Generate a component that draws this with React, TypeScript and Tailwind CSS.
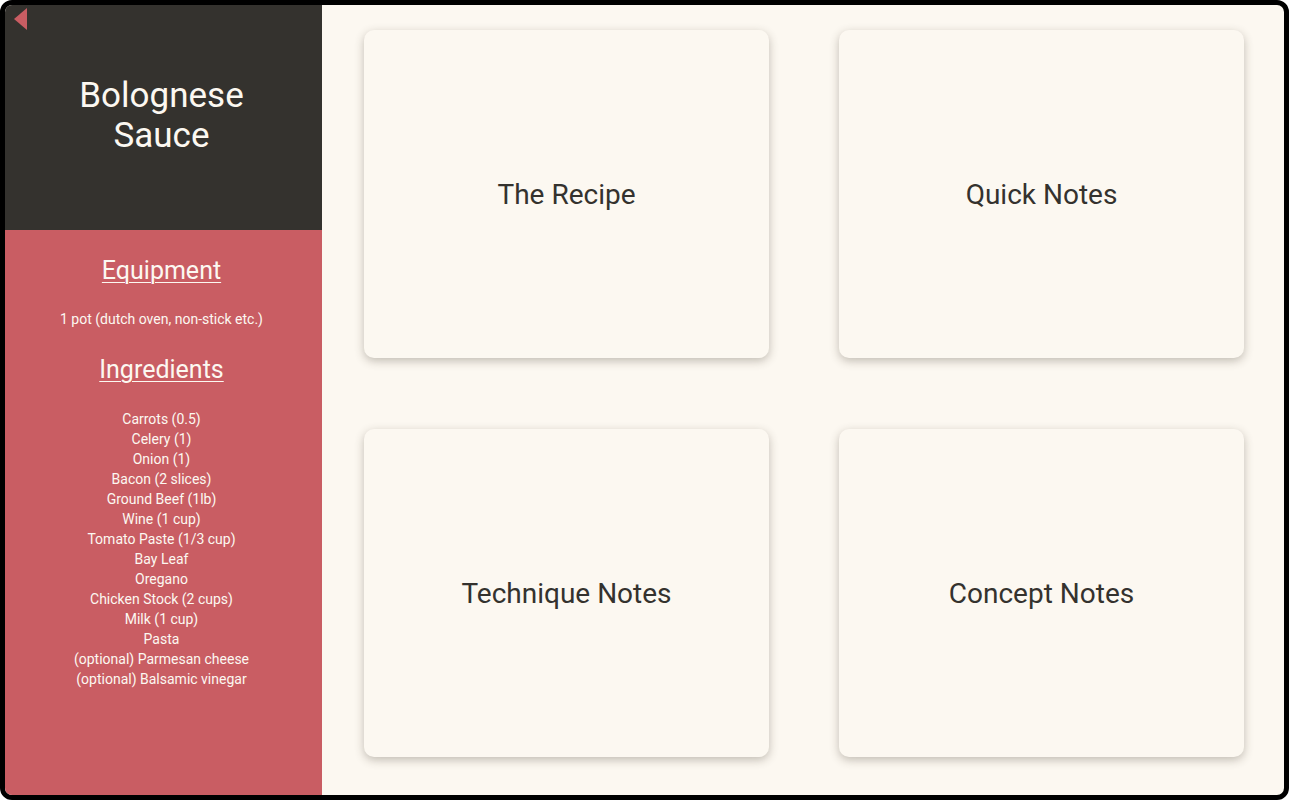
const ingredients = [
  "Carrots (0.5)",
  "Celery (1)",
  "Onion (1)",
  "Bacon (2 slices)",
  "Ground Beef (1lb)",
  "Wine (1 cup)",
  "Tomato Paste (1/3 cup)",
  "Bay Leaf",
  "Oregano",
  "Chicken Stock (2 cups)",
  "Milk (1 cup)",
  "Pasta",
  "(optional) Parmesan cheese",
  "(optional) Balsamic vinegar",
];

const sections = ["The Recipe", "Quick Notes", "Technique Notes", "Concept Notes"];

function Sidebar() {
  return (
    <aside className="flex w-[317px] shrink-0 flex-col">
      <div className="relative flex h-[225px] items-center justify-center bg-[#34322e] pb-[4px] pr-1">
        <button
          aria-label="Back"
          className="absolute left-[9px] top-[3px] h-[22px] w-[13px]"
        >
          <svg width="13" height="22" viewBox="0 0 13 22">
            <polygon points="13,0 13,22 0,11" fill="#c95d63" />
          </svg>
        </button>
        <h1 className="text-center text-[35px] font-normal leading-[40px] text-[#fcf8f1]">
          Bolognese
          <br />
          Sauce
        </h1>
      </div>
      <div className="flex flex-1 flex-col items-center bg-[#c95d63] pr-1 pt-[25px] text-center text-[#fcf8f1]">
        <h2 className="text-[25px] leading-8 underline underline-offset-[3px] decoration-1">
          Equipment
        </h2>
        <p className="mt-[22px] text-[14px] leading-5">1 pot (dutch oven, non-stick etc.)</p>
        <h2 className="mt-[25px] text-[25px] leading-8 underline underline-offset-[3px] decoration-1">
          Ingredients
        </h2>
        <ul className="mt-[23px] text-[14px] leading-5">
          {ingredients.map((item) => (
            <li key={item}>{item}</li>
          ))}
        </ul>
      </div>
    </aside>
  );
}

export default function App() {
  return (
    <div className="h-[800px] w-[1289px] bg-white font-['Roboto',sans-serif]">
      <div className="flex h-full w-full overflow-hidden rounded-[12px] border-[5px] border-black bg-[#fcf8f1]">
        <Sidebar />
        <main className="grid flex-1 grid-cols-[405px_405px] grid-rows-[328px_328px] gap-x-[70px] gap-y-[71px] pl-[42px] pt-[25px]">
          {sections.map((title) => (
            <div
              key={title}
              className="flex items-center justify-center rounded-[10px] bg-[#fcf8f1] pt-[2px] shadow-[0_3px_10px_rgba(60,50,35,0.3)]"
            >
              <span className="text-[28px] text-[#34322e]">{title}</span>
            </div>
          ))}
        </main>
      </div>
    </div>
  );
}
